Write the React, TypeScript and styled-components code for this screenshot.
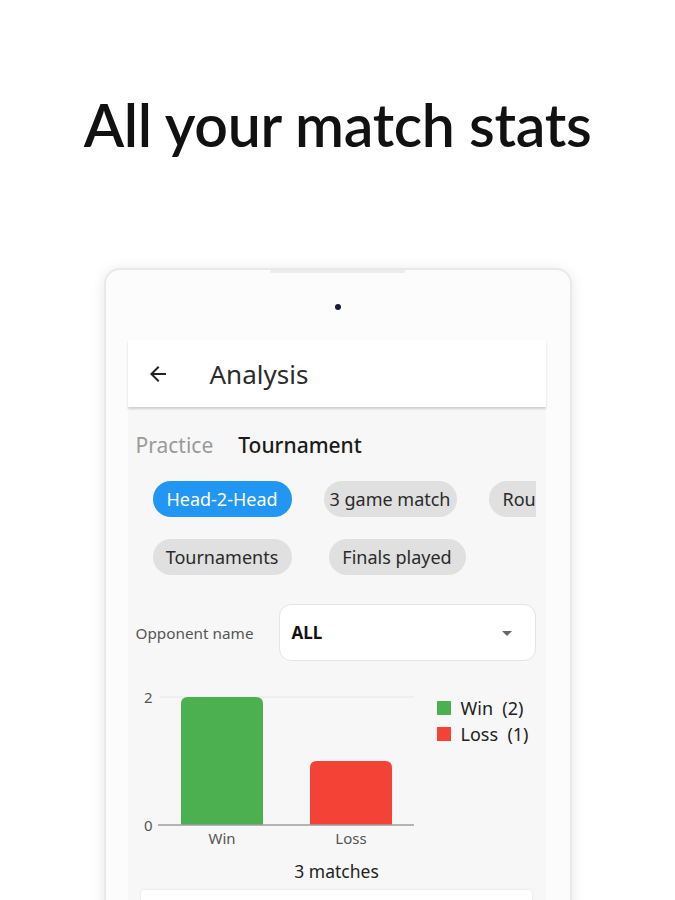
import * as React from "react";
import styled, { createGlobalStyle } from "styled-components";

const GlobalStyle = createGlobalStyle`
  html, body {
    margin: 0;
    padding: 0;
    background: #ffffff;
  }
  body {
    font-family: "Noto Sans", "Open Sans", sans-serif;
    color: #222;
  }
`;

const Page = styled.div`
  width: 675px;
  height: 900px;
  overflow: hidden;
  display: flex;
  flex-direction: column;
  align-items: center;
  background: #fff;
`;

const Headline = styled.h1`
  margin: 88px 0 0;
  font-family: "Lato", sans-serif;
  font-weight: 600;
  font-size: 59px;
  line-height: 74px;
  color: #111;
  letter-spacing: -0.3px;
`;

const Device = styled.div`
  margin-top: 106px;
  width: 464px;
  flex: 1;
  display: flex;
  flex-direction: column;
  align-items: center;
  background: #fcfcfc;
  border: 2px solid #e9e9e9;
  border-bottom: none;
  border-radius: 16px 16px 0 0;
  box-shadow: 0 2px 14px rgba(0, 0, 0, 0.1);
`;

const Speaker = styled.div`
  width: 135px;
  height: 3px;
  background: #ececec;
  border-radius: 2px;
`;

const Camera = styled.div`
  margin-top: 31px;
  width: 6px;
  height: 6px;
  border-radius: 50%;
  background: #1c1c3a;
`;

const Screen = styled.div`
  margin-top: 30px;
  align-self: stretch;
  margin-left: 22px;
  margin-right: 24px;
  flex: 1;
  background: #f7f7f7;
  display: flex;
  flex-direction: column;
`;

const AppBar = styled.div`
  height: 67px;
  background: #fff;
  display: flex;
  align-items: center;
  padding-left: 18px;
  box-shadow: 0 2px 2px rgba(0, 0, 0, 0.16);
  position: relative;
  z-index: 1;
`;

const BarTitle = styled.div`
  margin-left: 40px;
  font-size: 26px;
  color: #2b2b2b;
`;

const Content = styled.div`
  padding: 0 8px;
  display: flex;
  flex-direction: column;
`;

const Tabs = styled.div`
  margin-top: 20px;
  height: 36px;
  display: flex;
  align-items: center;
  gap: 25px;
`;

const Tab = styled.div<{ $active?: boolean }>`
  font-size: 21px;
  color: ${(p) => (p.$active ? "#1b1b1b" : "#9a9a9a")};
  font-weight: ${(p) => (p.$active ? 500 : 400)};
`;

const ChipRow = styled.div<{ $gap: number; $top: number }>`
  margin-top: ${(p) => p.$top}px;
  margin-left: 17px;
  width: 383px;
  overflow: hidden;
  display: flex;
  gap: ${(p) => p.$gap}px;
  white-space: nowrap;
`;

const Chip = styled.div<{ $active?: boolean; $w: number }>`
  flex: none;
  width: ${(p) => p.$w}px;
  height: 36px;
  border-radius: 18px;
  display: flex;
  align-items: center;
  justify-content: center;
  font-size: 18px;
  background: ${(p) => (p.$active ? "#2196f3" : "#e0e0e0")};
  color: ${(p) => (p.$active ? "#fff" : "#2a2a2a")};
`;

const ClippedChip = styled(Chip)`
  justify-content: flex-start;
  padding-left: 14px;
  box-sizing: border-box;
`;

const FilterRow = styled.div`
  margin-top: 29px;
  display: flex;
  align-items: center;
`;

const FilterLabel = styled.div`
  width: 143px;
  font-size: 15.3px;
  color: #555;
`;

const Select = styled.div`
  width: 257px;
  height: 57px;
  box-sizing: border-box;
  background: #fff;
  border: 1px solid #e4e4e4;
  border-radius: 12px;
  display: flex;
  align-items: center;
  justify-content: space-between;
  padding: 0 16px 0 12px;
`;

const SelectValue = styled.div`
  font-size: 17px;
  font-weight: 700;
  color: #111;
`;

const ChartRow = styled.div`
  margin-top: 24px;
  display: flex;
  align-items: flex-start;
`;

const Legend = styled.div`
  margin-left: 11px;
  margin-top: 11px;
  display: flex;
  flex-direction: column;
  gap: 3px;
`;

const LegendItem = styled.div`
  display: flex;
  align-items: center;
  font-size: 18px;
  color: #222;
  height: 23px;
  white-space: pre;
`;

const Swatch = styled.span<{ $color: string }>`
  width: 14px;
  height: 14px;
  background: ${(p) => p.$color};
  margin-right: 10px;
`;

const Caption = styled.div`
  margin-top: 9px;
  text-align: center;
  font-size: 17.5px;
  line-height: 24px;
  color: #222;
`;

const BottomCard = styled.div`
  margin: 7px 6px 0 5px;
  height: 40px;
  background: #fff;
  border-radius: 4px;
  box-shadow: 0 0 3px rgba(0, 0, 0, 0.1);
`;

const BackArrow = () => (
  <svg width="24" height="24" viewBox="0 0 24 24" fill="#222">
    <path d="M20 11H7.83l5.59-5.59L12 4l-8 8 8 8 1.41-1.41L7.83 13H20v-2z" />
  </svg>
);

const DropArrow = () => (
  <svg width="24" height="24" viewBox="0 0 24 24" fill="#666">
    <path d="M7 10l5 5 5-5z" />
  </svg>
);

const bars = [
  { label: "Win", value: 2, color: "#4caf50", x: 45 },
  { label: "Loss", value: 1, color: "#f44336", x: 174 },
];

const BarChart = () => {
  const base = 140;
  const top = 12;
  const scale = (base - top) / 2;
  return (
    <svg width="290" height="165" viewBox="0 0 290 165">
      <line x1="24" y1={top} x2="278" y2={top} stroke="#e6e6e6" strokeWidth="1" />
      {bars.map((b) => {
        const h = b.value * scale;
        const y = base - h;
        const w = 82;
        const r = 7;
        return (
          <path
            key={b.label}
            fill={b.color}
            d={`M${b.x} ${base} V${y + r} Q${b.x} ${y} ${b.x + r} ${y} H${b.x + w - r} Q${b.x + w} ${y} ${b.x + w} ${y + r} V${base} Z`}
          />
        );
      })}
      <line x1="22" y1={base} x2="278" y2={base} stroke="#9e9e9e" strokeWidth="1.5" />
      <text x="8" y={top + 6} fontSize="15" fill="#555" fontFamily="Noto Sans">2</text>
      <text x="8" y={base + 6} fontSize="15" fill="#555" fontFamily="Noto Sans">0</text>
      {bars.map((b) => (
        <text
          key={b.label}
          x={b.x + 41}
          y={base + 19}
          fontSize="15"
          fill="#555"
          textAnchor="middle"
          fontFamily="Noto Sans"
        >
          {b.label}
        </text>
      ))}
    </svg>
  );
};

export default function App() {
  return (
    <Page>
      <GlobalStyle />
      <Headline>All your match stats</Headline>
      <Device>
        <Speaker />
        <Camera />
        <Screen>
          <AppBar>
            <BackArrow />
            <BarTitle>Analysis</BarTitle>
          </AppBar>
          <Content>
            <Tabs>
              <Tab>Practice</Tab>
              <Tab $active>Tournament</Tab>
            </Tabs>
            <ChipRow $gap={32} $top={18}>
              <Chip $active $w={139}>Head-2-Head</Chip>
              <Chip $w={133}>3 game match</Chip>
              <ClippedChip $w={110}>Round robin</ClippedChip>
            </ChipRow>
            <ChipRow $gap={37} $top={22}>
              <Chip $w={139}>Tournaments</Chip>
              <Chip $w={137}>Finals played</Chip>
            </ChipRow>
            <FilterRow>
              <FilterLabel>Opponent name</FilterLabel>
              <Select>
                <SelectValue>ALL</SelectValue>
                <DropArrow />
              </Select>
            </FilterRow>
            <ChartRow>
              <BarChart />
              <Legend>
                <LegendItem>
                  <Swatch $color="#4caf50" />
                  {"Win  (2)"}
                </LegendItem>
                <LegendItem>
                  <Swatch $color="#f44336" />
                  {"Loss  (1)"}
                </LegendItem>
              </Legend>
            </ChartRow>
            <Caption>3 matches</Caption>
            <BottomCard />
          </Content>
        </Screen>
      </Device>
    </Page>
  );
}
